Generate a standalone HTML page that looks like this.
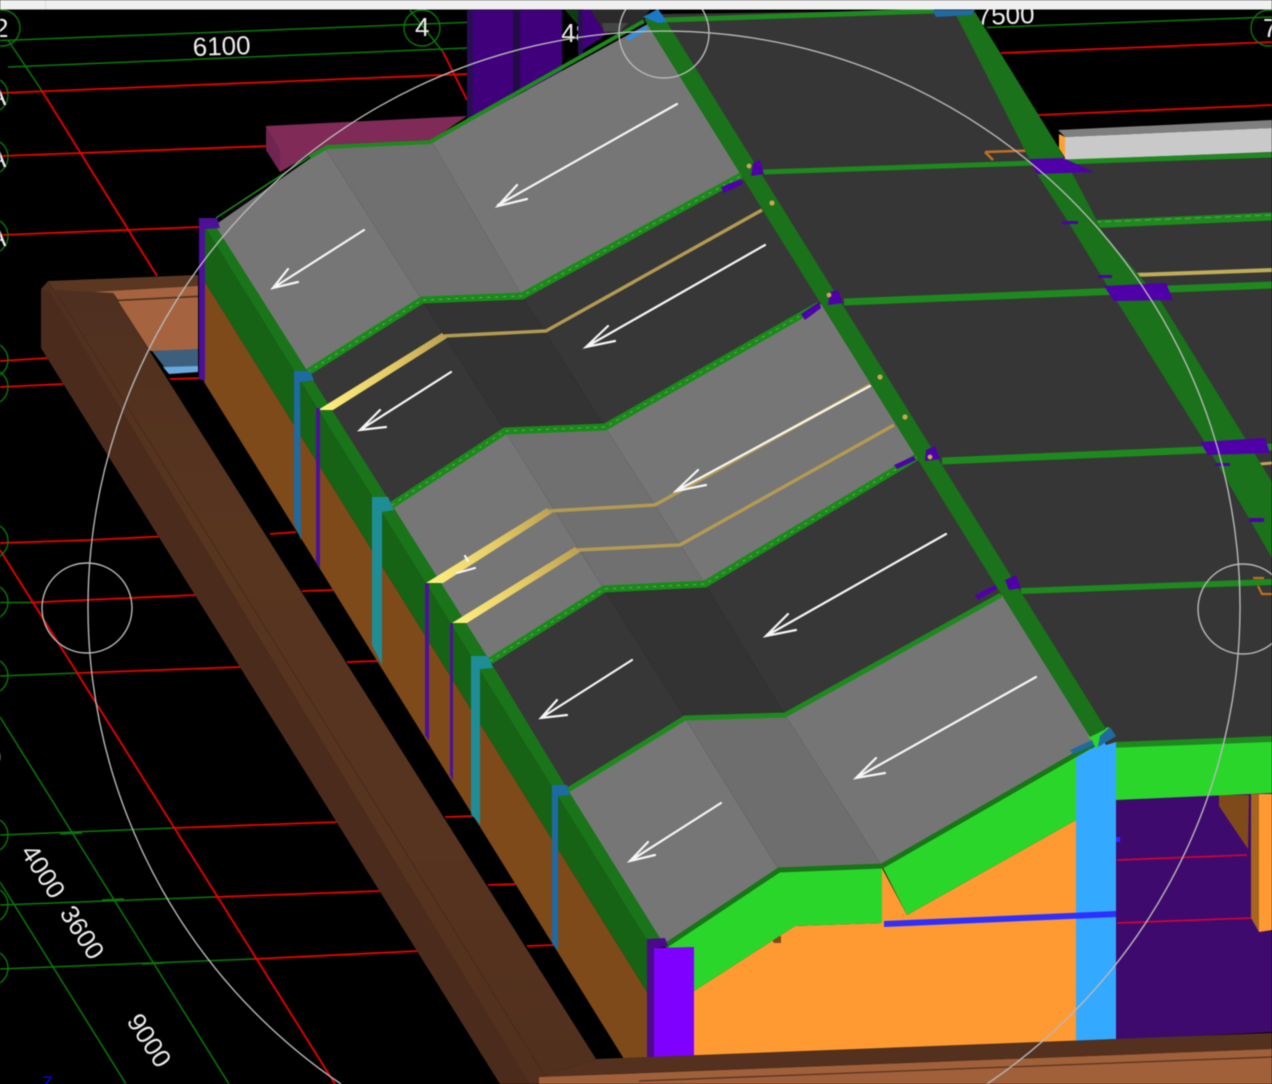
<!DOCTYPE html>
<html><head><meta charset="utf-8"><style>
html,body{margin:0;padding:0;background:#000;width:1272px;height:1084px;overflow:hidden}
body{position:relative}
svg{display:block;filter:blur(0.45px)}
text{font-family:"Liberation Sans",sans-serif;fill:#eee}
#z{position:absolute;left:42px;top:1074px;width:14px;height:10px;overflow:hidden;color:#0000ff;font:17px/17px "Liberation Sans",sans-serif}
</style></head><body>
<svg width="1272" height="1084" viewBox="0 0 1272 1084" xmlns="http://www.w3.org/2000/svg">
<defs>
<linearGradient id="g1" gradientUnits="userSpaceOnUse" x1="320" y1="410" x2="444" y2="336"><stop offset="0" stop-color="#fff080"/><stop offset=".55" stop-color="#e6cb66"/><stop offset="1" stop-color="#bda252"/></linearGradient>
<linearGradient id="g2" gradientUnits="userSpaceOnUse" x1="428" y1="583" x2="549" y2="511"><stop offset="0" stop-color="#fff080"/><stop offset=".55" stop-color="#e6cb66"/><stop offset="1" stop-color="#bda252"/></linearGradient>
<linearGradient id="g3" gradientUnits="userSpaceOnUse" x1="453" y1="624" x2="577" y2="550"><stop offset="0" stop-color="#fff080"/><stop offset=".55" stop-color="#e6cb66"/><stop offset="1" stop-color="#bda252"/></linearGradient>
<linearGradient id="br" gradientUnits="userSpaceOnUse" x1="0" y1="290" x2="0" y2="1084"><stop offset="0" stop-color="#4f3020"/><stop offset=".3" stop-color="#58351f"/><stop offset=".7" stop-color="#57341f"/><stop offset="1" stop-color="#51301e"/></linearGradient>
</defs>
<rect width="1272" height="1084" fill="#000"/>
<!-- grid -->
<g fill="none">
<g stroke="#0a7a0a" stroke-width="1.5">
<path d="M0 40.6L467 22.4M8 67L467 48M987 27.5L1272 17"/>
<path d="M8 40L42 91M410 10L443 52"/>
<path d="M0 602.5L31 602.5M0 676L78 673M0 835L173 828M0 905L214 897M0 969L253 959"/>
<path d="M0 717L229 1084M0 882L126 1084"/>
<path d="M60 834L82 833M102 900L124 899M142 964L164 963"/>
</g>
<g stroke="#f00000" stroke-width="1.8">
<path d="M0 93L467 74M0 156L268 146M0 235L200 227M42 91L157 276M443 52L467 100"/>
<path d="M0 361L48 358M0 387L63 384M170 379L202 378M90 540L159 536.5M270 534L296 532"/>
<path d="M0 543L90 540M31 602.5L196 595M302 591L333 590M78 673L241 667M347 662L378 661"/>
<path d="M173 828L337 822M445 817L473 816M214 897L380 891M488 885L516 884M253 959L418 951M527 946L555 945"/>
<path d="M0 550L335 1084M1001 53L1272 42M1038 115L1272 105"/>
</g>
<g stroke="#0a7a0a" stroke-width="1.4">
<circle cx="2" cy="28" r="18"/><circle cx="-10" cy="95" r="18"/><circle cx="-10" cy="157" r="18"/><circle cx="-10" cy="236" r="18"/>
<circle cx="-10" cy="360" r="18"/><circle cx="-10" cy="387" r="18"/><circle cx="-10" cy="541" r="18"/><circle cx="-10" cy="602" r="18"/>
<circle cx="-10" cy="676" r="18"/><circle cx="-10" cy="835" r="18"/><circle cx="-10" cy="905" r="18"/><circle cx="-10" cy="968" r="18"/>
<circle cx="422" cy="28" r="18"/><circle cx="1269" cy="28" r="18"/>
</g>
</g>
<!-- labels -->
<g font-size="26">
<text x="-6" y="37">2</text>
<text x="-11" y="105">A</text><text x="-11" y="167">A</text><text x="-11" y="246">A</text>
<text x="-13" y="766">0</text>
<text x="415" y="36">4</text>
<text x="193" y="56" transform="rotate(-2 193 56)">6100</text>
<text x="561" y="42">48</text>
<text x="977" y="25" transform="rotate(-2 977 25)">7500</text>
<text x="1263" y="37">7</text>
<text transform="translate(20,852) rotate(57)">4000</text>
<text transform="translate(59,913) rotate(57)">3600</text>
<text transform="translate(126,1021) rotate(57)">9000</text>
</g>
<!-- back columns -->
<rect x="467" y="10" width="46" height="115" fill="#40007c"/>
<rect x="467" y="10" width="6" height="115" fill="#2a0e55"/>
<rect x="513" y="10" width="7" height="90" fill="#230c46"/>
<rect x="520" y="10" width="42" height="80" fill="#40007c"/>
<polygon points="565,10 578,10 578,25" fill="#0f3d0f"/>
<rect x="578" y="10" width="5" height="45" fill="#2a0e55"/>
<polygon points="583,9 590,9 608,33 583,50" fill="#40007c"/>
<polygon points="590,9 650,9 645,18 620,32 604,32" fill="#2a2a2a"/>
<polygon points="602,23 628,23 620,32 604,32" fill="#444"/>
<!-- maroon -->
<polygon points="266,126 467,116 432,140 325,146 280,172 266,150" fill="#7f2a57"/>
<polygon points="266,126 280,150 280,172 266,150" fill="#6f2550"/>
<!-- back pit -->
<polygon points="48,281 198,275 198,288 113,293 58,294" fill="#5b3722"/>
<polygon points="58,294 198,286 198,296 118,300 113,293" fill="#a5643f"/>
<polygon points="118,301 198,297 198,350 150,351" fill="#a5643f"/>
<path d="M118 300L198 296" stroke="#6a4028" stroke-width="1.2"/>
<polygon points="152,351 198,349 198,367 165,368" fill="#3d5f7e"/>
<polygon points="163,367 198,366 198,372 169,374" fill="#6aa8e0"/>
<!-- long brown beam -->
<polygon points="41,289 113,293 596,1059 539,1077 539,1084 500,1084 41,348" fill="url(#br)"/>
<polygon points="41,289 50,292 530,1084 500,1084 41,348" fill="#4b2b1c"/>
<polygon points="41,289 48,281 58,294 50,292" fill="#4f2f1e"/>
<path d="M58 295L550 1084" stroke="#4a2a1a" stroke-width="1.2" fill="none"/>
<!-- wall -->
<polygon points="205,282 647,992 647,1059 624,1059 204,382" fill="#7e4a1a"/>
<!-- right purple interior -->
<polygon points="1116,798 1272,790 1272,1032 1116,1040" fill="#3f0a6e"/>
<path d="M1117 860L1247 855M1117 923L1251 918" stroke="#e00030" stroke-width="1.6" fill="none"/>
<rect x="1116" y="837" width="4" height="5" fill="#2a2aff"/>
<polygon points="1219,795 1249,795 1248,849 1219,806" fill="#7e4a1a"/>
<polygon points="1251,794 1259,794 1259,932 1251,918" fill="#a8651f"/>
<polygon points="1259,794 1272,794 1272,930 1259,932" fill="#ff9a33"/>
<!-- orange wall -->
<polygon points="694,991 795,926 882,923 882,868 907,915 1076,820 1076,1042 694,1058" fill="#ff9a33"/>
<polygon points="771,938 781,936 781,943 774,943" fill="#7e4a1a"/>
<polygon points="830,867 882,864 882,870 830,872" fill="#b96a1c"/>
<!-- bright green -->
<polygon points="668,946 779,870 882,866 882,923 795,926 694,991 668,1000" fill="#2bd62b"/>
<polygon points="882,866 1092,744 1076,820 907,915" fill="#2bd62b"/>
<polygon points="1116,747 1272,741 1272,793 1116,800" fill="#2bd62b"/>
<polygon points="1106,741 1272,735 1272,742 1106,748" fill="#1e8a1e"/>
<!-- blue column -->
<polygon points="1076,757 1116,735 1116,1039 1076,1041" fill="#33a9ff"/>
<polygon points="884,921 1116,911 1116,917 884,927" fill="#2f2fff"/>
<!-- dark roof right -->
<polygon points="662,14 960,10 1058,158 1272,152 1272,736 1116,742 1106,745" fill="#363636"/>
<!-- white box -->
<polygon points="1058,130 1272,120 1272,128 1065,137" fill="#7f7f7f"/>
<polygon points="1065,137 1272,128 1272,152 1065,160" fill="#c9c9c9"/>
<polygon points="1059,134 1065,137 1065,158 1059,148" fill="#ffa033"/>
<!-- roof bays upper -->
<g fill="none">
<path d="M664 20L934 11" stroke="#1e8a1e" stroke-width="5"/>
<path d="M763 172L1272 155" stroke="#1e8a1e" stroke-width="5"/>
<path d="M844 302L1272 285" stroke="#1e8a1e" stroke-width="7"/>
<path d="M942 461L1272 447" stroke="#1e8a1e" stroke-width="7"/>
<path d="M1021 591L1272 582" stroke="#1e8a1e" stroke-width="6"/>
<path d="M1095 224L1272 216.5" stroke="#1e8a1e" stroke-width="8"/>
<path d="M1095 222L1272 215" stroke="#5aa850" stroke-width="1" stroke-dasharray="6 4"/>
<path d="M1133 275L1272 270" stroke="#bfae58" stroke-width="4"/>
<path d="M1249 465L1272 463" stroke="#c0a557" stroke-width="3"/>
<path d="M985 152L1045 150M985 152L993 160" stroke="#c07020" stroke-width="2.6"/>
<path d="M1253 578L1264 578M1258 586L1262 594L1272 594" stroke="#c07020" stroke-width="2.2"/>
</g>
<!-- fascia -->
<polygon points="205,229 220,228 668,946 654,948 647,992 205,282" fill="#166316"/>
<polygon points="206,228 220,228 668,946 651,946" fill="#1a751a"/>
<!-- roof panels -->
<polygon points="215,225 325,148 422,300 308,372" fill="#767676"/>
<polygon points="325,148 432,142 522,296 422,300" fill="#707070"/>
<polygon points="432,142 655,20 750,176 522,296" fill="#767676"/>
<polygon points="308,372 422,300 505,431 392,505" fill="#373737"/>
<polygon points="422,300 522,296 605,427 505,431" fill="#333"/>
<polygon points="522,296 750,172 828,303 605,427" fill="#373737"/>
<polygon points="392,505 505,431 604,589 490,661" fill="#767676"/>
<polygon points="505,431 605,427 705,584 604,589" fill="#707070"/>
<polygon points="605,427 828,300 930,452 705,584" fill="#767676"/>
<polygon points="490,661 604,589 685,718 568,790" fill="#373737"/>
<polygon points="604,589 705,584 785,715 685,718" fill="#333"/>
<polygon points="705,584 930,448 1010,593 785,715" fill="#373737"/>
<polygon points="568,790 685,718 779,870 665,946" fill="#767676"/>
<polygon points="685,718 785,715 882,866 779,870" fill="#6e6e6e"/>
<polygon points="785,715 1010,590 1098,742 882,866" fill="#757575"/>
<!-- panel bands -->
<g fill="none" stroke-linejoin="miter">
<path d="M216 218L312 155" stroke="#1e8a1e" stroke-width="1.6"/>
<path d="M310 157L327 147L430 142L644 21" stroke="#1e8a1e" stroke-width="4"/>
<path d="M308 372L422 300L522 296L741 176" stroke="#1a8a1a" stroke-width="7"/>
<path d="M392 505L505 431L605 427L819 305" stroke="#1a8a1a" stroke-width="7"/>
<path d="M490 661L604 589L705 584L920 455" stroke="#1a8a1a" stroke-width="7"/>
<path d="M568 790L685 718L785 715L1001 595" stroke="#1e8a1e" stroke-width="5"/>
<path d="M665 946L779 870L882 866L1094 744" stroke="#187518" stroke-width="5"/>
<g stroke="#5fae50" stroke-width="1" stroke-dasharray="3 5">
<path d="M308 372L422 300L522 296L741 176"/>
<path d="M392 505L505 431L605 427L819 305"/>
<path d="M490 661L604 589L705 584L920 455"/>
</g>
<!-- gold -->
<path d="M444 336L546 331L762 210" stroke="#b49b52" stroke-width="3.4"/>
<path d="M549 511L655 505L870 385" stroke="#b49b52" stroke-width="3.4"/>
<path d="M577 550L680 545L894 425" stroke="#b49b52" stroke-width="3.4"/>
</g>
<polygon points="318,410 333,410 447,338 442,333" fill="url(#g1)"/>
<polygon points="426,583 443,583 552,513 547,508" fill="url(#g2)"/>
<polygon points="452,623 467,623 580,552 575,547" fill="url(#g3)"/>
<!-- beams -->
<polygon points="1088,736 1108,727 1116,736 1096,748" fill="#2bd62b"/>
<polygon points="644,19 662,14 1106,729 1090,737" fill="#1a721a"/>
<polygon points="956,15 975,12 1059,148 1104,234 1160,300 1272,482 1272,558 1204,441 1116,300 1067,220 1037,174" fill="#1a721a"/>
<!-- side columns -->
<polygon points="199,218 217,218 220,228 205,229 205,381 199,379" fill="#4d109a"/>
<polygon points="294,371 310,371 314,380 300,382 301,540 294,523" fill="#1f6aa0"/>
<polygon points="316,408 320,408 320,568 316,562" fill="#4d109a"/>
<polygon points="372,497 388,497 394,510 382,512 382,665 372,645" fill="#1e8d96"/>
<polygon points="425,583 429,583 429,741 425,735" fill="#4d109a"/>
<polygon points="450,623 453,623 453,781 450,775" fill="#4d109a"/>
<polygon points="471,656 488,656 493,668 480,669 480,825 471,814" fill="#1e8d96"/>
<polygon points="552,785 567,785 570,795 558,796 558,951 552,943" fill="#1f6aa0"/>
<!-- purple corner column -->
<polygon points="647,939 665,938 668,946 654,948 654,1057 647,1057" fill="#4a0a8a"/>
<polygon points="654,948 694,947 694,1056 654,1057" fill="#8000ff"/>
<!-- ground beam -->
<polygon points="596,1059 1272,1033 1272,1049 639,1073 539,1077" fill="#54311f"/>
<polygon points="539,1077 1272,1049 1272,1084 539,1084" fill="#a0603a"/>
<path d="M639 1081L1272 1057" stroke="#5e3722" stroke-width="1.4"/>
<!-- connectors -->
<g fill="#1f6aa0">
<polygon points="1070,750 1092,740 1094,745 1073,754"/>
<polygon points="1100,736 1110,727 1116,736 1098,747"/>
<polygon points="932,10 975,10 972,15 936,17"/>
</g>
<polygon points="643,17 658,9 667,22 658,23" fill="#1e78c8"/>
<polygon points="626,37 647,25 647,30 628,41" fill="#2f8fe0"/>
<g fill="#5000a8">
<polygon points="753,163 760,160 764,174 751,176"/>
<polygon points="721,187 741,179 743,184 724,193"/>
<polygon points="830,292 838,290 843,303 828,305"/>
<polygon points="801,314 819,302 821,308 805,320"/>
<polygon points="926,450 935,446 940,459 925,461"/>
<polygon points="894,465 914,456 916,460 897,469"/>
<polygon points="1005,580 1016,575 1021,588 1009,590"/>
<polygon points="975,595 995,585 997,589 978,600"/>
<polygon points="1029,159 1063,158 1094,172 1037,174"/>
<polygon points="1104,286 1166,283 1173,300 1114,301"/>
<polygon points="1200,442 1265,438 1270,453 1208,455"/>
<rect x="1062" y="221" width="16" height="3"/>
<rect x="1098" y="275" width="14" height="3"/>
<rect x="1215" y="463" width="15" height="3"/>
<rect x="1249" y="518" width="15" height="4"/>
</g>
<!-- gold dots -->
<g fill="#c8a850">
<circle cx="749" cy="166" r="2.4"/><circle cx="772" cy="203" r="2.6"/><circle cx="829" cy="295" r="2.4"/>
<circle cx="880" cy="377" r="2.6"/><circle cx="905" cy="417" r="2.6"/><circle cx="930" cy="457" r="2.4"/>
</g>
<!-- arrows -->
<g fill="none" stroke="#f6f6f6" stroke-width="2.2" stroke-linecap="round">
<path d="M677 104L498 205M517 185L498 206L527 199"/>
<path d="M364 230L273 288M288 269L273 288L298 282"/>
<path d="M765 245L586 347M608 326L586 347L615 341"/>
<path d="M451 372L360 430M380 410L360 430L386 427"/>
<path d="M870 386L676 491M698 470L676 491L706 485"/>
<path d="M946 534L766 636M788 614L766 636L796 630"/>
<path d="M632 660L541 718M557 700L541 718L567 715"/>
<path d="M1036 677L856 778M876 758L856 778L885 773"/>
<path d="M721 803L630 861M648 842L630 861L655 855"/>
<path d="M465 556L468 561M475 568L457 573"/>
</g>
<!-- circles -->
<g fill="none" stroke="#b8b8b8" stroke-width="1.4">
<path d="M341 1084A576 576 0 1 1 987 1084"/>
<circle cx="664" cy="33" r="45"/>
<circle cx="87" cy="608" r="45"/>
<circle cx="1243" cy="609" r="45"/>
</g>
<!-- top strip -->
<rect x="0" y="0" width="1272" height="9.5" fill="#f0f0f0"/>
<rect x="45" y="0" width="1" height="9.5" fill="#dcdcdc"/>
</svg>
<div id="z">Z</div>
</body></html>
